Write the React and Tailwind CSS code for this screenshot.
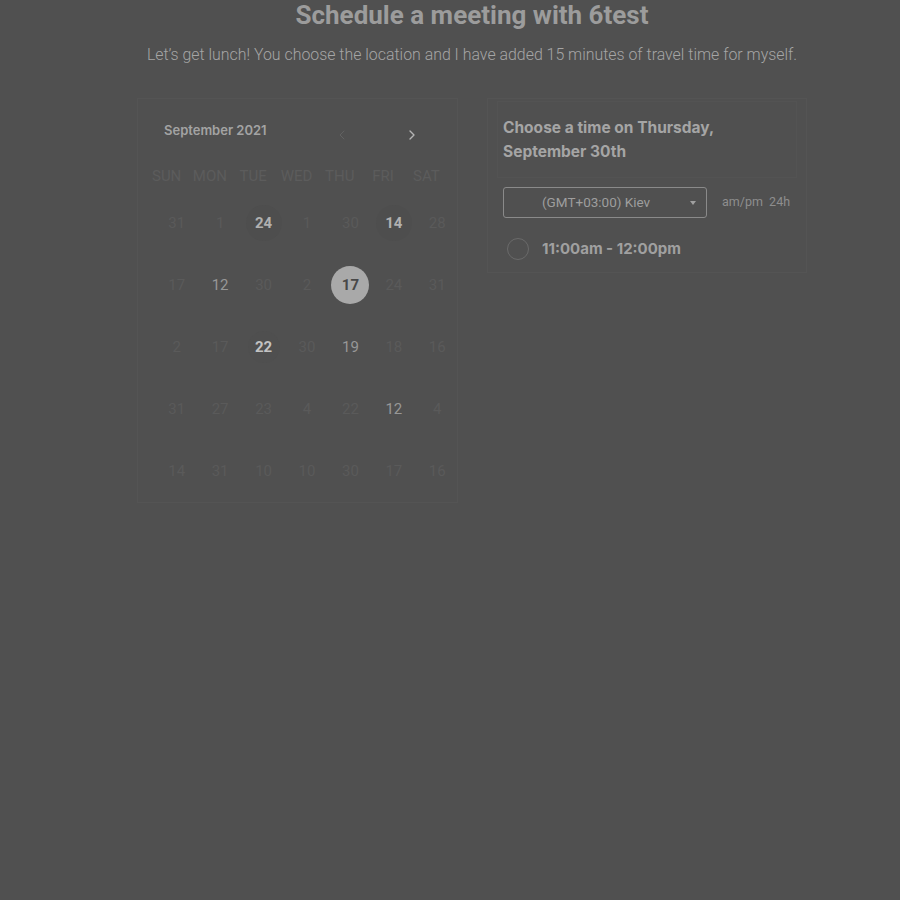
import React from "react";
import { ChevronLeft, ChevronRight } from "lucide-react";

const rows = [
  [["31", 0], ["1", 0], ["24", 2], ["1", 0], ["30", 0], ["14", 2], ["28", 0]],
  [["17", 0], ["12", 1], ["30", 0], ["2", 0], ["17", 3], ["24", 0], ["31", 0]],
  [["2", 0], ["17", 0], ["22", 4], ["30", 0], ["19", 1], ["18", 0], ["16", 0]],
  [["31", 0], ["27", 0], ["23", 0], ["4", 0], ["22", 0], ["12", 1], ["4", 0]],
  [["14", 0], ["31", 0], ["10", 0], ["10", 0], ["30", 0], ["17", 0], ["16", 0]],
];

const days = ["SUN", "MON", "TUE", "WED", "THU", "FRI", "SAT"];

function Cell({ v, t }) {
  if (t === 3) {
    return (
      <div className="flex items-center justify-center">
        <div className="w-[38px] h-[38px] rounded-full bg-[#a9a9a9] flex items-center justify-center text-[15px] font-bold text-[#484848]">
          {v}
        </div>
      </div>
    );
  }
  if (t === 2) {
    return (
      <div className="flex items-center justify-center">
        <div className="w-[36px] h-[36px] rounded-full bg-[#4e4e4e] flex items-center justify-center text-[15px] font-bold text-[#b0b0b0]">
          {v}
        </div>
      </div>
    );
  }
  if (t === 4) {
    return (
      <div className="flex items-center justify-center">
        <div className="w-[32px] h-[32px] rounded-full bg-[#4f4f4f] flex items-center justify-center text-[15px] font-bold text-[#c2c2c2]">
          {v}
        </div>
      </div>
    );
  }
  return (
    <div
      className={
        "flex items-center justify-center text-[15px] " +
        (t === 1 ? "text-[#979797]" : "text-[#5a5a5a]")
      }
    >
      {v}
    </div>
  );
}

export default function App() {
  return (
    <div
      className="w-[900px] h-[900px] bg-[#505050] flex flex-col items-center pl-[44px]"
      style={{ fontFamily: "Roboto, 'Liberation Sans', sans-serif" }}
    >
      <h1 className="mt-[0px] h-[30px] leading-[30px] text-[26px] font-bold text-[#9c9c9c]">
        Schedule a meeting with 6test
      </h1>
      <p className="mt-[10px] h-[30px] leading-[30px] text-[15.9px] font-light text-[#a5a5a5]">
        Let’s get lunch! You choose the location and I have added 15 minutes of travel time for myself.
      </p>

      <div className="mt-[28px] flex gap-[29px] w-[670px] items-start">
        {/* Calendar */}
        <div className="w-[321px] border border-[#545454] px-[7px]">
          <div className="mt-[12px] h-[40px] flex items-center pl-[19px]">
            <span
              className="w-[170px] text-[13px] font-semibold text-[#a3a3a3]"
              style={{ fontFamily: "Inter, 'Liberation Sans', sans-serif" }}
            >
              September 2021
            </span>
            <span className="w-[16px] pt-[7px] flex justify-center text-[#626262]">
              <ChevronLeft size={18} strokeWidth={1.5} />
            </span>
            <span className="ml-[54px] w-[16px] pt-[7px] flex justify-center text-[#b5b5b5]">
              <ChevronRight size={18} strokeWidth={2} />
            </span>
          </div>
          <div className="mt-[10px] grid grid-cols-7 h-[30px] items-center mr-[2px]">
            {days.map((d) => (
              <div key={d} className="text-center text-[15px] text-[#5c5c5c]">
                {d}
              </div>
            ))}
          </div>
          <div className="pt-[1px] ml-[10px] mr-[-9px]">
            {rows.map((r, i) => (
              <div key={i} className="grid grid-cols-7 h-[62px] items-center">
                {r.map(([v, t], j) => (
                  <Cell key={j} v={v} t={t} />
                ))}
              </div>
            ))}
          </div>
        </div>

        {/* Time picker */}
        <div
          className="w-[320px] border border-[#545454] pb-[5px]"
          style={{ fontFamily: "Inter, 'Liberation Sans', sans-serif" }}
        >
          <div className="mx-[9px] mt-[2px] border border-[#535353] h-[77px] flex flex-col justify-center pl-[5px]">
            <div className="text-[15.5px] font-bold leading-[24px] text-[#a5a5a5]">
              Choose a time on Thursday,
            </div>
            <div className="text-[15.5px] font-bold leading-[24px] text-[#a5a5a5]">
              September 30th
            </div>
          </div>
          <div className="mt-[9px] pl-[15px] flex items-center">
            <div
              className="w-[204px] h-[31px] border border-[#8a8a8a] rounded-[3px] flex items-center pl-[38px] pr-[10px] text-[13.5px] text-[#9e9e9e]"
              style={{ fontFamily: "Roboto, 'Liberation Sans', sans-serif" }}
            >
              <span className="flex-1">(GMT+03:00) Kiev</span>
              <span className="w-0 h-0 border-l-[3.5px] border-r-[3.5px] border-t-[4px] border-l-transparent border-r-transparent border-t-[#a0a0a0]"></span>
            </div>
            <span
              className="ml-[15px] text-[12.5px] text-[#8e8e8e]"
              style={{ fontFamily: "Roboto, 'Liberation Sans', sans-serif" }}
            >
              am/pm&nbsp;&nbsp;24h
            </span>
          </div>
          <div className="mt-[13px] pl-[19px] flex items-center h-[36px]">
            <div className="w-[22px] h-[22px] rounded-full border-[1.5px] border-[#6a6a6a]"></div>
            <span className="ml-[13px] text-[15px] font-bold text-[#a0a0a0]">
              11:00am - 12:00pm
            </span>
          </div>
        </div>
      </div>
    </div>
  );
}
